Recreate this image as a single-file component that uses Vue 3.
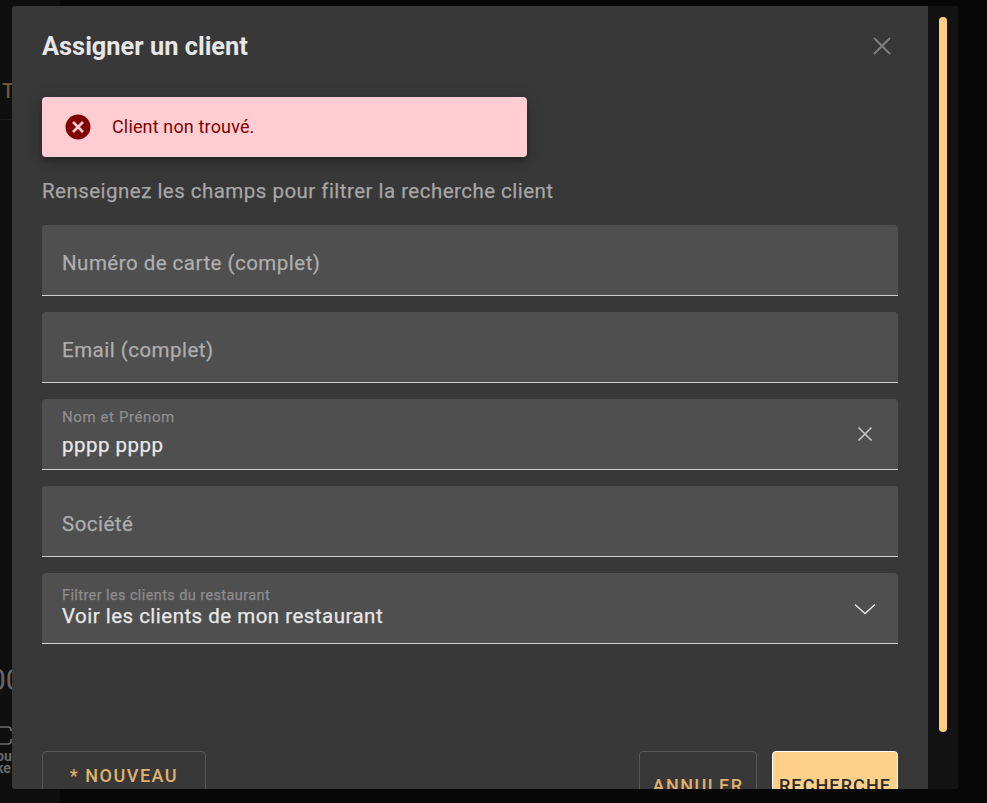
<script setup>
const fields = [
  { label: 'Numéro de carte (complet)' },
  { label: 'Email (complet)' },
  { label: 'Nom et Prénom', value: 'pppp pppp', icon: 'clear', kind: 'input' },
  { label: 'Société' },
  { label: 'Filtrer les clients du restaurant', value: 'Voir les clients de mon restaurant', icon: 'chevron', kind: 'select' }
]
</script>

<template>
  <div class="page">
    <aside class="behind">
      <div class="behind-head"><span class="behind-t">T</span></div>
      <div class="behind-body">
        <span class="behind-num">00</span>
        <svg class="behind-icon" width="16" height="20" viewBox="0 0 16 20" fill="none">
          <path d="M0 1h9a3 3 0 0 1 3 3v1M12 13v2a3 3 0 0 1-3 3H0" stroke="#6f6f6f" stroke-width="1.6" />
        </svg>
        <span class="behind-text">ou<br />ke</span>
      </div>
    </aside>

    <div class="modal">
      <main class="content">
        <header class="head">
          <h1 class="title">Assigner un client</h1>
          <svg class="close" width="20" height="20" viewBox="0 0 20 20" fill="none">
            <path d="M2 2l16 16M18 2L2 18" stroke="#7e7e7e" stroke-width="2" />
          </svg>
        </header>

        <div class="alert">
          <svg class="alert-icon" width="26" height="26" viewBox="0 0 26 26">
            <circle cx="13" cy="13" r="12.500" fill="#800000" />
            <path d="M8 8l10 10M18 8L8 18" stroke="#ffcdd2" stroke-width="2.600" fill="none" />
          </svg>
          <span class="alert-text">Client non trouvé.</span>
        </div>

        <p class="hint">Renseignez les champs pour filtrer la recherche client</p>

        <div class="fields">
          <div v-for="f in fields" :key="f.label" class="field">
            <div class="field-main" :class="f.kind">
              <template v-if="f.value">
                <span class="label-small">{{ f.label }}</span>
                <span class="value">{{ f.value }}</span>
              </template>
              <span v-else class="label">{{ f.label }}</span>
            </div>
            <svg v-if="f.icon === 'clear'" class="field-icon" width="16" height="16" viewBox="0 0 16 16" fill="none">
              <path d="M1.500 1.500l13 13M14.500 1.500l-13 13" stroke="#c4c4c4" stroke-width="1.700" />
            </svg>
            <svg v-if="f.icon === 'chevron'" class="field-icon chevron" width="22" height="12" viewBox="0 0 22 12" fill="none">
              <path d="M1 1.500l10 9 10-9" stroke="#e8e8e8" stroke-width="1.400" />
            </svg>
          </div>
        </div>

        <footer class="actions">
          <button class="btn new">* NOUVEAU</button>
          <span class="spacer"></span>
          <button class="btn cancel">ANNULER</button>
          <button class="btn search">RECHERCHE</button>
        </footer>
      </main>
      <div class="track"><div class="thumb"></div></div>
    </div>
  </div>
</template>

<style scoped>
.page {
  position: relative;
  width: 987px;
  height: 803px;
  overflow: hidden;
  background: #070707;
  font-family: Roboto, "Liberation Sans", sans-serif;
}
.behind {
  width: 60px;
  height: 803px;
  background: #0f0f0f;
  color: #6f6f6f;
  display: flex;
  flex-direction: column;
}
.behind-head {
  height: 120px;
  padding: 79px 0 0 2px;
  box-sizing: border-box;
  border-bottom: 1px solid #1b1b1b;
  flex: none;
}
.behind-t {
  font-size: 20px;
  line-height: 24px;
  font-weight: 500;
  color: #6e5636;
}
.behind-body {
  flex: none;
  height: 683px;
  padding-top: 544px;
  box-sizing: border-box;
  display: flex;
  flex-direction: column;
  align-items: flex-start;
}
.behind-num {
  font-size: 30px;
  line-height: 32px;
  margin-left: -11px;
  color: #666;
}
.behind-icon {
  margin: 30px 0 0 -1px;
}
.behind-text {
  font-size: 14px;
  line-height: 12px;
  font-weight: 700;
  color: #6a6a6a;
  margin-top: 4px;
  margin-left: -4px;
}
.modal {
  position: absolute;
  left: 12px;
  top: 6px;
  width: 946px;
  height: 783px;
  display: flex;
  overflow: hidden;
  border-radius: 4px;
  background: #383838;
}
.content {
  flex: none;
  width: 916px;
  height: 783px;
  padding: 0 30px;
  box-sizing: border-box;
  overflow: hidden;
  background: #383838;
}
.head {
  height: 91px;
  display: flex;
  align-items: flex-start;
  justify-content: space-between;
}
.title {
  margin: 24px 0 0;
  font-size: 25.400px;
  line-height: 32px;
  font-weight: 700;
  color: #e6e6e6;
}
.close {
  margin: 30px 6px 0 0;
}
.alert {
  width: 485px;
  height: 60px;
  display: flex;
  align-items: center;
  gap: 21px;
  padding-left: 23px;
  box-sizing: border-box;
  border-radius: 4px;
  background: #ffcdd2;
  color: #800000;
  font-size: 18px;
  letter-spacing: 0.15px;
  box-shadow: 0 3px 5px -1px rgba(0, 0, 0, 0.2), 0 6px 10px 0 rgba(0, 0, 0, 0.14), 0 1px 18px 0 rgba(0, 0, 0, 0.12);
}
.alert-icon {
  flex: none;
}
.alert-text {
  margin-bottom: 2px;
}
.hint {
  margin: 22px 0 22px;
  font-size: 20.500px;
  line-height: 24px;
  letter-spacing: 0.47px;
  -webkit-text-stroke: 0.25px currentColor;
  color: #a6a6a6;
}
.fields {
  display: flex;
  flex-direction: column;
  gap: 16px;
}
.field {
  height: 71px;
  box-sizing: border-box;
  display: flex;
  align-items: center;
  padding: 0 20px;
  border-radius: 4px 4px 0 0;
  border-bottom: 1px solid #d0d0d0;
  background: #4f4f4f;
}
.field-main {
  flex: 1;
  display: flex;
  flex-direction: column;
  letter-spacing: 0.48px;
  -webkit-text-stroke: 0.25px currentColor;
}
.label {
  font-size: 20.500px;
  line-height: 24px;
  color: #aeaeae;
  margin-top: 6px;
}
.label-small {
  font-size: 14.500px;
  line-height: 16px;
  letter-spacing: 0.4px;
  color: #8d8d8d;
}
.input .label-small {
  font-size: 15px;
  letter-spacing: 0.6px;
  margin-top: -3px;
}
.input .value {
  margin-top: 8px;
}
.select .label-small {
  margin-top: -1px;
}
.select .value {
  margin-top: 0;
}
.value {
  font-size: 20.500px;
  line-height: 24px;
  color: #e8e8e8;
}
.field-icon {
  flex: none;
  margin-right: 5px;
}
.field-icon.chevron {
  margin-right: 2px;
  margin-top: 2px;
}
.actions {
  display: flex;
  gap: 15px;
  margin-top: 107px;
}
.spacer {
  flex: 1;
}
.btn {
  height: 50px;
  box-sizing: border-box;
  padding: 0;
  border-radius: 4px;
  font-family: inherit;
  font-size: 18px;
  font-weight: 500;
  letter-spacing: 1.500px;
  background: transparent;
}
.new {
  width: 164px;
  padding-bottom: 2px;
  border: 1px solid #585858;
  color: #e0b26e;
}
.cancel {
  width: 118px;
  height: 68px;
  border: 1px solid #585858;
  color: #e0b26e;
}
.search {
  width: 126px;
  height: 68px;
  border: 1px solid #fff;
  background: #ffd08a;
  color: #2c2c2c;
  letter-spacing: 1.100px;
}
.track {
  flex: none;
  width: 30px;
  height: 783px;
  padding: 11px 0 0 11px;
  box-sizing: border-box;
  background: #121212;
}
.thumb {
  width: 8px;
  height: 715px;
  border-radius: 4px;
  background: #ffcc80;
}
</style>

<style>
html, body { background: #070707; }
</style>
